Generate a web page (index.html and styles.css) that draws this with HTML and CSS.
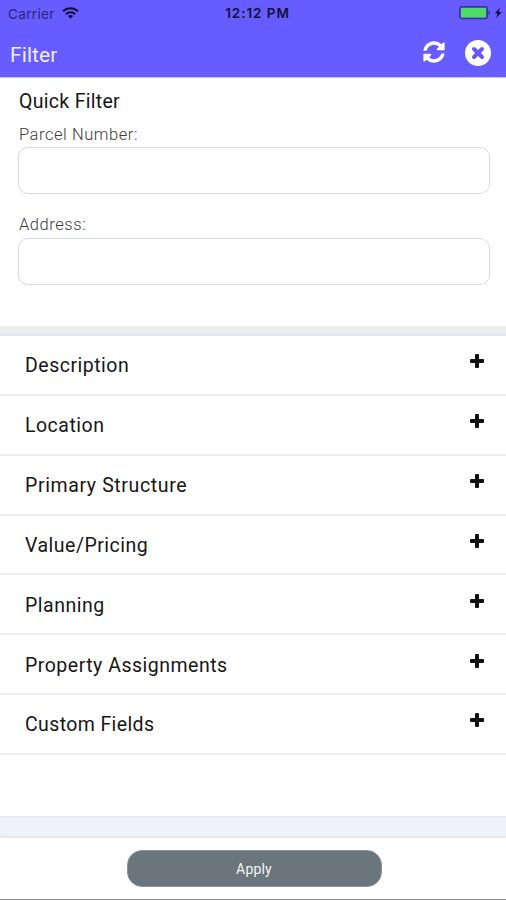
FILE: index.html
```html
<!DOCTYPE html>
<html lang="en">
<head>
<meta charset="utf-8">
<title>Filter</title>
<link rel="stylesheet" href="styles.css">
</head>
<body>
<header class="header">
  <div class="status">
    <div class="carrier"><span class="carrier-name">Carrier</span>
      <svg class="wifi" width="17" height="12" viewBox="0 0 17 12"><g fill="none" stroke="#10103a" stroke-width="2"><path d="M1 4.4C5 .3 12 .3 16 4.4"/><path d="M3.8 7.2c2.7-2.6 6.7-2.6 9.4 0"/></g><path fill="#10103a" d="M5.9 9c1.6-1.3 3.6-1.3 5.2 0l-2.6 2.8z"/></svg>
    </div>
    <span class="time">12:12 PM</span>
    <svg class="battery" width="44" height="14" viewBox="0 0 44 14"><rect x=".7" y=".7" width="27.6" height="12" rx="2" fill="#5b4fd8" stroke="#37309a" stroke-width="1.2"/><rect x="2" y="2" width="25" height="9.4" rx=".8" fill="#4cdb63"/><path d="M29.7 4.6c1.6.6 1.6 3.6 0 4.2z" fill="#29246f"/><path d="M41 1.4l-5.2 6h2.8l-1.5 4.8 5.6-6.3h-3z" fill="#10103a"/></svg>
  </div>
  <div class="titlebar">
    <h1 class="title">Filter</h1>
    <div class="actions">
      <svg width="22" height="22" viewBox="0 0 512 512" fill="#fff"><path d="M371 134c-32-30-73-46-116-46-78 0-145 53-164 127-1 5-6 9-12 9H22c-8 0-13-7-12-14C32 94 134 8 256 8c66 0 127 26 172 69l36-36c15-15 40-5 40 17v134c0 13-11 24-24 24H346c-22 0-32-26-17-41zM32 296h134c22 0 32 26 17 41l-42 42c32 30 73 46 116 46 78 0 145-53 164-127 1-5 6-9 12-9h57c8 0 13 7 12 14-22 116-124 201-246 201-66 0-127-26-172-69l-36 36c-15 15-40 5-40-17V320c0-13 11-24 24-24z"/></svg>
      <svg width="26" height="26" viewBox="0 0 26 26"><circle cx="13" cy="13" r="13" fill="#fff"/><path d="M9 9l8 8M17 9l-8 8" stroke="#6459fa" stroke-width="4" stroke-linecap="round"/></svg>
    </div>
  </div>
</header>
<section class="quick">
  <h2 class="heading">Quick Filter</h2>
  <label class="label" for="parcel">Parcel Number:</label>
  <input class="field" id="parcel" type="text">
  <label class="label" for="address">Address:</label>
  <input class="field" id="address" type="text">
</section>
<main class="list">
  <div class="row"><span>Description</span><i class="plus"></i></div>
  <div class="row"><span>Location</span><i class="plus"></i></div>
  <div class="row"><span class="wide">Primary Structure</span><i class="plus"></i></div>
  <div class="row"><span>Value/Pricing</span><i class="plus"></i></div>
  <div class="row"><span>Planning</span><i class="plus"></i></div>
  <div class="row"><span>Property Assignments</span><i class="plus"></i></div>
  <div class="row"><span class="narrow">Custom Fields</span><i class="plus"></i></div>
</main>
<footer class="footer"><button class="apply" type="button">Apply</button></footer>
</body>
</html>
```
FILE: styles.css
```css
* { box-sizing: border-box; }
body {
  margin: 0;
  height: 900px;
  overflow: hidden;
  display: flex;
  flex-direction: column;
  background: linear-gradient(#ebedef 50%, #f1f2f7 50%);
  color: #161616;
  font-family: Roboto, "Liberation Sans", sans-serif;
}
.header {
  height: 78px;
  background: #675cff;
  border-bottom: 1px solid #c9c5ff;
}
.status {
  height: 27px;
  padding: 0 4px 0 8px;
  display: grid;
  grid-template-columns: 1fr auto 1fr;
  align-items: center;
  font-family: Inter, sans-serif;
  font-size: 13px;
  color: #10103a;
}
.carrier { display: flex; align-items: center; gap: 7px; }
.carrier-name { color: #2a2670; font-size: 13.5px; letter-spacing: .35px; }
.carrier svg { margin-top: -2px; }
.time { font-weight: 600; font-size: 13.5px; letter-spacing: .95px; margin-left: 5px; margin-top: -1px; }
.battery { justify-self: end; margin: -1px -1px 0 0; }
.titlebar {
  height: 50px;
  padding: 0 15px 0 10px;
  display: flex;
  align-items: center;
  justify-content: space-between;
}
.title { margin: 5px 0 0; font-size: 21px; font-weight: 400; color: #efedff; letter-spacing: .1px; }
.actions { display: flex; align-items: center; gap: 20px; margin-top: 2px; }
.actions svg { display: block; }
.actions svg:first-child { margin-top: -2px; }
.quick {
  height: 248px;
  padding: 11px 16px 0 18px;
  background: #fff;
}
.heading { margin: 0; font-size: 19.5px; line-height: 25px; font-weight: 400; letter-spacing: .3px; padding-left: 1px; }
.label {
  display: block;
  height: 34px;
  padding: 11px 0 0 1px;
  font-size: 16.5px;
  line-height: 20px;
  font-weight: 300;
  color: #3c3c3c;
  letter-spacing: .55px;
}
.heading + .label { height: 33px; }
.field {
  display: block;
  width: 472px;
  height: 47px;
  margin: 0 0 10px;
  padding: 0 12px;
  border: 1px solid #d7dbdd;
  border-radius: 10px;
  background: #fff;
  outline: 0;
}
.list {
  height: 480px;
  margin-top: 10px;
  background: #fff;
  box-shadow: 0 0 2px 1px #dfe2e5;
}
.row {
  height: 59.85px;
  padding: 2px 22px 0 25px;
  display: flex;
  align-items: center;
  justify-content: space-between;
  border-bottom: 2px solid #ebecee;
  font-size: 19.5px;
  letter-spacing: .5px;
}
.wide { letter-spacing: .62px; }
.narrow { letter-spacing: .38px; }
.plus {
  width: 14px;
  height: 14px;
  margin-top: -9px;
  position: relative;
}
.plus::before,
.plus::after {
  content: "";
  position: absolute;
  border-radius: 1px;
  background: #111;
}
.plus::before { left: 0; top: 5px; width: 14px; height: 4px; }
.plus::after { left: 5px; top: 0; width: 4px; height: 14px; }
.footer {
  height: 62px;
  margin-top: 22px;
  padding: 12px 0 0 2px;
  background: #fff;
  border-bottom: 1px solid #868686;
  box-shadow: 0 0 3px 1px #dcdfe3;
  text-align: center;
}
.apply {
  width: 255px;
  height: 37px;
  padding: 0;
  border: 1px solid #8d9498;
  border-radius: 15px;
  background: #6a757c;
  color: #f3f5f6;
  font-family: Roboto, sans-serif;
  font-size: 14px;
  letter-spacing: .2px;
}
```
